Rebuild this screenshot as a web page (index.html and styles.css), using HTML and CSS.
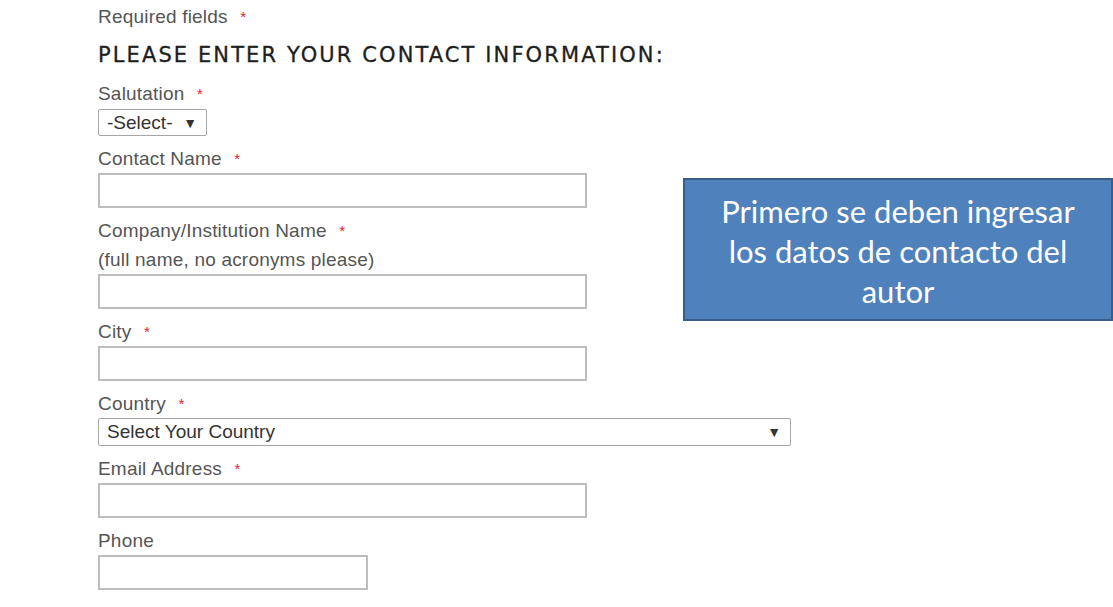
FILE: index.html
```html
<!DOCTYPE html>
<html lang="en">
<head>
  <meta charset="UTF-8" />
  <title>Contact Information</title>
  <link rel="stylesheet" href="styles.css">
</head>
<body>
  <div class="page">
    <form class="contact-form">
      <div class="required-note">Required fields <span class="req">*</span></div>
      <h2 class="form-title">PLEASE ENTER YOUR CONTACT INFORMATION:</h2>

      <div class="field field-first">
        <label>Salutation <span class="req">*</span></label>
        <div class="select select-small"><span>-Select-</span><span class="arrow">&#9660;</span></div>
      </div>

      <div class="field">
        <label>Contact Name <span class="req">*</span></label>
        <input type="text" class="text-input">
      </div>

      <div class="field">
        <label>Company/Institution Name <span class="req">*</span></label>
        <div class="hint">(full name, no acronyms please)</div>
        <input type="text" class="text-input">
      </div>

      <div class="field">
        <label>City <span class="req">*</span></label>
        <input type="text" class="text-input">
      </div>

      <div class="field">
        <label>Country <span class="req">*</span></label>
        <div class="select select-wide"><span>Select Your Country</span><span class="arrow">&#9660;</span></div>
      </div>

      <div class="field">
        <label>Email Address <span class="req">*</span></label>
        <input type="text" class="text-input">
      </div>

      <div class="field">
        <label>Phone</label>
        <input type="text" class="text-input short">
      </div>
    </form>

    <div class="callout">Primero se deben ingresar los datos de contacto del autor</div>
  </div>
</body>
</html>
```

FILE: styles.css
```css
* {
  margin: 0;
  padding: 0;
  box-sizing: border-box;
}

body {
  font-family: "Liberation Sans", Arial, sans-serif;
  background: #fff;
  color: #555;
  width: 1113px;
  height: 607px;
  overflow: hidden;
}

.page {
  position: relative;
  height: 607px;
}

.contact-form {
  padding: 6px 0 0 98px;
}

.required-note {
  font-size: 19px;
  line-height: 22px;
  letter-spacing: 0.2px;
}

.req {
  color: #e8202a;
  font-size: 15px;
  margin-left: 7px;
  vertical-align: top;
}

.form-title {
  margin-top: 12px;
  font-family: "DejaVu Sans", sans-serif;
  font-weight: normal;
  font-size: 21px;
  line-height: 30px;
  letter-spacing: 2.1px;
  color: #1e1e1e;
  -webkit-text-stroke: 0.3px #1e1e1e;
}

.field {
  margin-top: 11px;
}

.field-first {
  margin-top: 12px;
}

.field label,
.hint {
  display: block;
  font-size: 19px;
  line-height: 23px;
  letter-spacing: 0.2px;
}

.hint {
  margin-top: 6px;
}

.text-input {
  display: block;
  margin-top: 3px;
  width: 489px;
  height: 35px;
  border: 2px solid #bdbdbd;
  background: #fff;
}

.text-input.short {
  width: 270px;
}

.select {
  margin-top: 4px;
  display: flex;
  align-items: center;
  justify-content: space-between;
  border: 1px solid #a6a6a6;
  border-radius: 2px;
  background: #fff;
  color: #333;
  font-size: 19px;
  padding: 0 9px 0 8px;
}

.select-small {
  width: 109px;
  height: 27px;
}

.select-wide {
  margin-top: 3px;
  width: 693px;
  height: 28px;
}

.arrow {
  font-size: 14px;
  color: #333;
}

.callout {
  position: absolute;
  left: 683px;
  top: 178px;
  width: 430px;
  height: 143px;
  background: #4f81bd;
  border: 2px solid #385d8a;
  color: #fff;
  font-family: Lato, "Noto Sans", sans-serif;
  font-size: 31px;
  line-height: 40px;
  text-align: center;
  padding: 11px 26px 0;
}
```
